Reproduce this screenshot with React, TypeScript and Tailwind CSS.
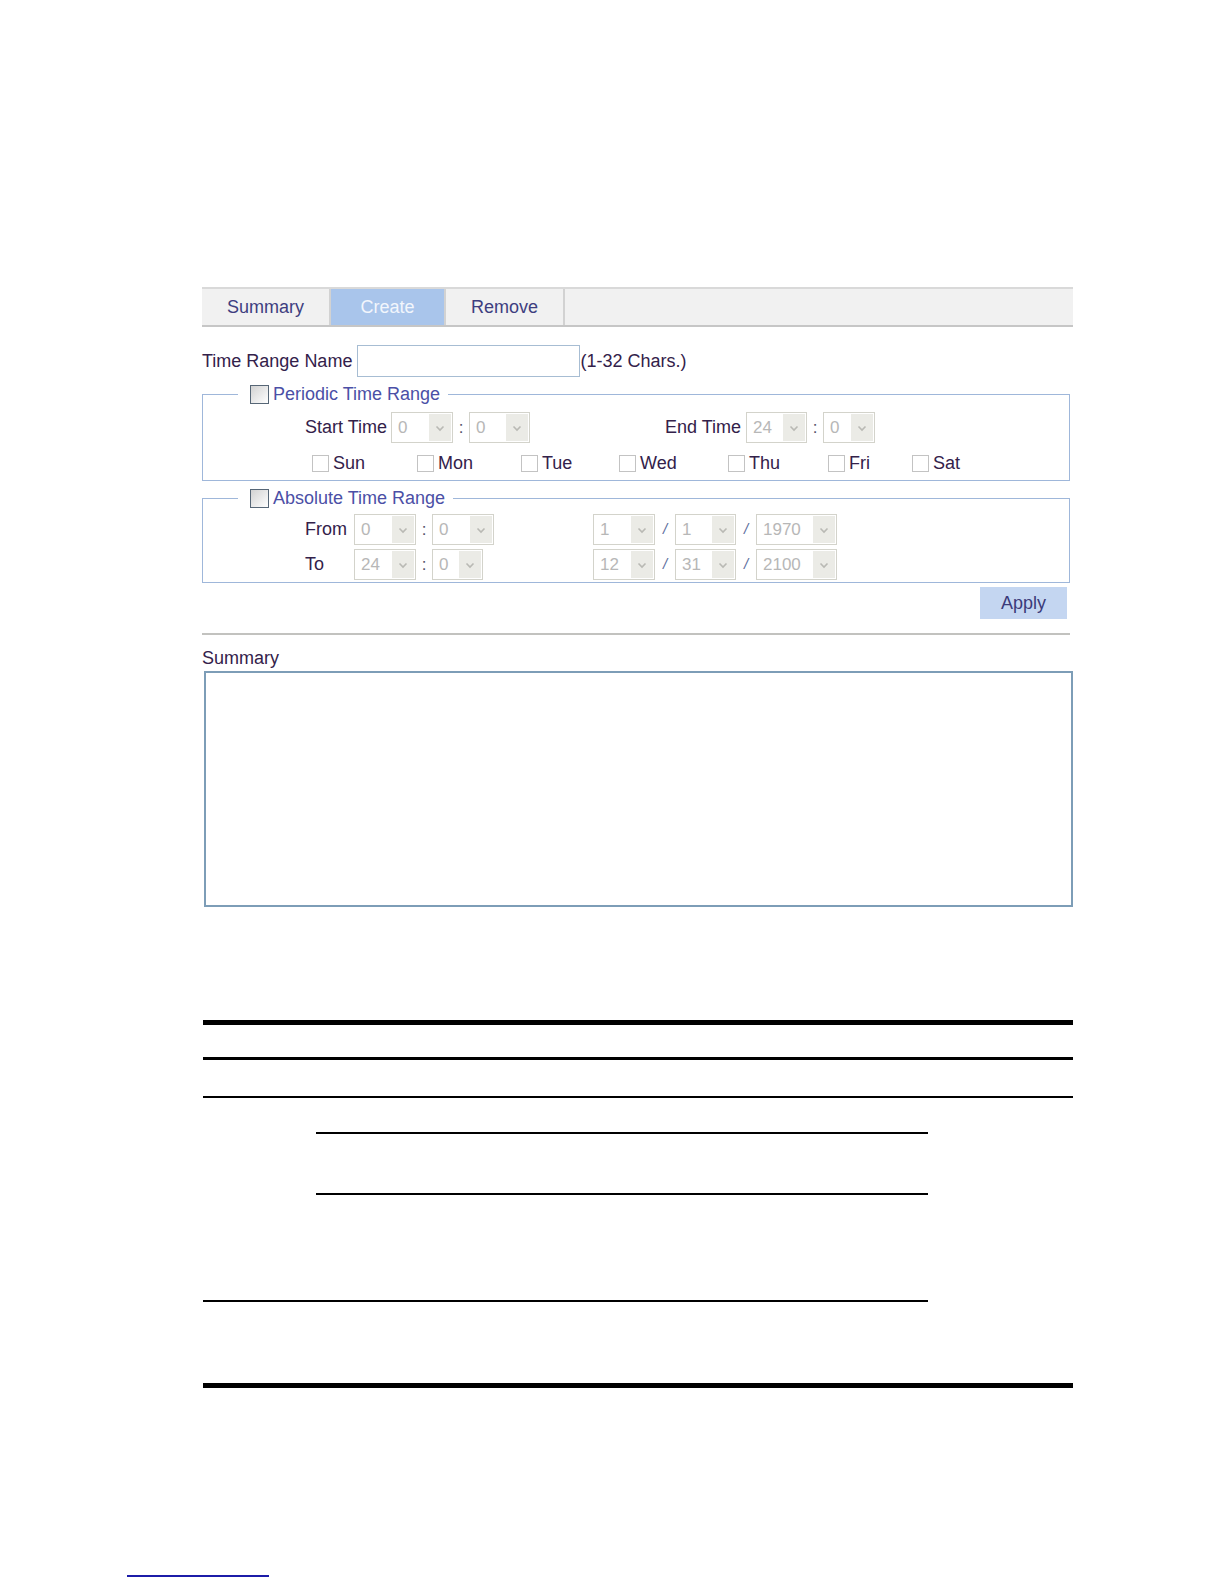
import React from "react";

const days = [
  { label: "Sun", w: "w-[105px]" },
  { label: "Mon", w: "w-[104px]" },
  { label: "Tue", w: "w-[98px]" },
  { label: "Wed", w: "w-[109px]" },
  { label: "Thu", w: "w-[100px]" },
  { label: "Fri", w: "w-[84px]" },
  { label: "Sat", w: "w-[60px]" },
];

function Chevron() {
  return (
    <svg width="12" height="12" viewBox="0 0 12 12" fill="none">
      <polyline points="2.5,4.5 6,8 9.5,4.5" stroke="#b9b9b4" strokeWidth="1.6" />
    </svg>
  );
}

function Sel({ value, className }: { value: string; className: string }) {
  return (
    <div className={`flex h-[31px] shrink-0 border border-[#d3d3cb] bg-white p-px ${className}`}>
      <span className="flex-1 pl-[5px] text-[17px] leading-[27px] text-[#b7b7b7]">{value}</span>
      <span className="flex w-[22px] items-center justify-center bg-[#ebebe6]">
        <Chevron />
      </span>
    </div>
  );
}

function Colon() {
  return <span className="w-[16px] shrink-0 text-center text-[17px] text-[#55556a]">:</span>;
}

function Slash() {
  return <span className="w-[20px] shrink-0 text-center text-[15px] italic text-[#5b6c9c]">/</span>;
}

function LegendBox({ text }: { text: string }) {
  return (
    <legend className="ml-[35px] flex items-center pl-[12px] pr-[8px]">
      <span className="h-[19px] w-[19px] border border-[#566676] bg-linear-to-br from-[#d2d2d2] to-white" />
      <span className="ml-[4px] text-[18px] leading-[20px] text-[#4b4fa6]">{text}</span>
    </legend>
  );
}

export default function App() {
  return (
    <main className="min-h-[1584px] w-full bg-white pt-[287px] font-['Liberation_Sans',Arial,sans-serif] text-[18px] text-[#33214a]">
      <div className="ml-[202px] w-[871px]">
        {/* tabs */}
        <div className="flex h-[40px] border-t-2 border-b-2 border-t-[#d9d9d9] border-b-[#c6c6c6] bg-[#f1f1f1]">
          <div className="flex w-[129px] items-center justify-center border-r-2 border-[#d2d2d2] text-[#3e3e80]">Summary</div>
          <div className="flex w-[113px] items-center justify-center bg-[#a9c5eb] text-[#f2f6fc]">Create</div>
          <div className="flex w-[121px] items-center justify-center border-x-2 border-[#d2d2d2] text-[#3e3e80]">Remove</div>
        </div>

        {/* name */}
        <div className="mt-[18px] flex h-[32px] items-center">
          <span>Time Range Name</span>
          <span className="ml-[5px] h-[32px] w-[223px] border border-[#a7bdd3] bg-white" />
          <span>(1-32 Chars.)</span>
        </div>

        {/* periodic */}
        <fieldset className="mt-[7px] w-[868px] border border-[#9fb7da] pb-[8px]">
          <LegendBox text="Periodic Time Range" />
          <div className="mt-[8px] flex h-[31px] items-center pl-[102px]">
            <span className="mr-[4px]">Start Time</span>
            <Sel value="0" className="w-[62px]" />
            <Colon />
            <Sel value="0" className="w-[61px]" />
            <span className="ml-[135px] mr-[5px]">End Time</span>
            <Sel value="24" className="w-[61px]" />
            <Colon />
            <Sel value="0" className="w-[52px]" />
          </div>
          <div className="mt-[11px] flex h-[18px] items-center pl-[109px]">
            {days.map((d) => (
              <div key={d.label} className={`flex shrink-0 items-center ${d.w}`}>
                <span className="h-[17px] w-[17px] border border-[#c3c3c3] bg-white" />
                <span className="ml-[4px] leading-[20px]">{d.label}</span>
              </div>
            ))}
          </div>
        </fieldset>

        {/* absolute */}
        <fieldset className="mt-[7px] w-[868px] border border-[#9fb7da] pb-[2px]">
          <LegendBox text="Absolute Time Range" />
          <div className="mt-[6px] flex h-[31px] items-center pl-[102px]">
            <span className="w-[49px]">From</span>
            <div className="flex w-[239px] items-center">
              <Sel value="0" className="w-[62px]" />
              <Colon />
              <Sel value="0" className="w-[62px]" />
            </div>
            <Sel value="1" className="w-[62px]" />
            <Slash />
            <Sel value="1" className="w-[61px]" />
            <Slash />
            <Sel value="1970" className="w-[81px]" />
          </div>
          <div className="mt-[4px] flex h-[31px] items-center pl-[102px]">
            <span className="w-[49px]">To</span>
            <div className="flex w-[239px] items-center">
              <Sel value="24" className="w-[62px]" />
              <Colon />
              <Sel value="0" className="w-[51px]" />
            </div>
            <Sel value="12" className="w-[62px]" />
            <Slash />
            <Sel value="31" className="w-[61px]" />
            <Slash />
            <Sel value="2100" className="w-[81px]" />
          </div>
        </fieldset>

        <div className="mt-[4px] flex w-[868px] justify-end">
          <button className="mr-[3px] h-[32px] w-[87px] bg-[#c4d6f1] text-[18px] text-[#3b3b7a]">Apply</button>
        </div>

        <div className="mt-[14px] h-[2px] w-[868px] bg-[#c2c2bf]" />

        <p className="mt-[13px] leading-[20px]">Summary</p>
        <div className="ml-[2px] mt-[3px] h-[236px] w-[869px] border-2 border-[#7d9db7] bg-white" />

        {/* document table rules */}
        <div className="ml-px mt-[113px] w-[870px]">
          <div className="h-[37px] border-t-[5px] border-black" />
          <div className="h-[39px] border-t-[3px] border-black" />
          <div className="border-t-2 border-black">
            <div className="pl-[113px]">
              <div className="h-[34px]" />
              <div className="h-[61px] w-[612px] border-t-2 border-black" />
              <div className="h-[107px] w-[612px] border-t-2 border-black" />
            </div>
            <div className="h-[83px] w-[725px] border-t-2 border-black" />
          </div>
          <div className="border-t-[5px] border-black" />
        </div>
      </div>

      <div className="ml-[127px] mt-[187px] h-[2px] w-[142px] bg-[#1c1ca8]" />
    </main>
  );
}
